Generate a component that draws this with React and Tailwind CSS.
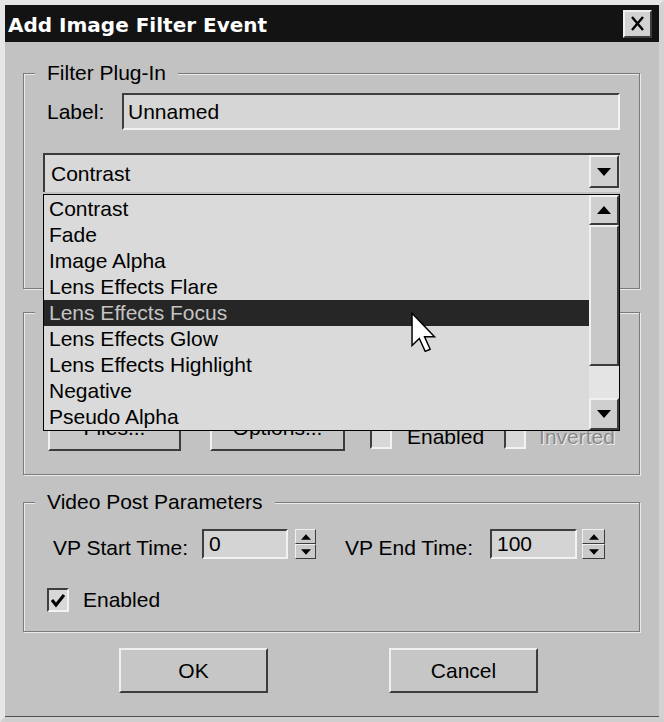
import React from "react";

const raised =
  "border-2 border-t-[#f0f0f0] border-l-[#f0f0f0] border-r-[#3c3c3c] border-b-[#3c3c3c]";
const raisedThin =
  "border border-t-[#f0f0f0] border-l-[#f0f0f0] border-r-[#3c3c3c] border-b-[#3c3c3c]";
const sunken =
  "border-2 border-t-[#3e3e3e] border-l-[#3e3e3e] border-r-[#f2f2f2] border-b-[#f2f2f2]";

function Tri({ up = false, w = 14, h = 8 }) {
  return (
    <svg width={w} height={h} viewBox="0 0 14 8" className="block">
      {up ? <polygon points="0,8 14,8 7,0" fill="#000" /> : <polygon points="0,0 14,0 7,8" fill="#000" />}
    </svg>
  );
}

function Group({ title, className = "", children }) {
  return (
    <fieldset
      className={
        "border border-[#7a7a7a] px-[11px] shadow-[inset_1px_1px_0_#ebebeb,1px_1px_0_#ebebeb] " + className
      }
    >
      <legend className="bg-[#c2c2c2] px-[12px] leading-[24px]">{title}</legend>
      {children}
    </fieldset>
  );
}

function Button({ className = "", children, top = false }) {
  return (
    <div
      className={
        raised +
        " flex justify-center bg-[#c6c6c6] leading-[24px] " +
        (top ? "items-start pt-[2px] " : "items-center ") +
        className
      }
    >
      {children}
    </div>
  );
}

function Spinner({ className = "" }) {
  return (
    <div className={"flex h-full flex-col " + className}>
      <div className={raisedThin + " flex flex-1 items-center justify-center bg-[#cacaca]"}>
        <Tri up w={10} h={6} />
      </div>
      <div className={raisedThin + " flex flex-1 items-center justify-center bg-[#cacaca]"}>
        <Tri w={10} h={6} />
      </div>
    </div>
  );
}

const items = [
  "Contrast",
  "Fade",
  "Image Alpha",
  "Lens Effects Flare",
  "Lens Effects Focus",
  "Lens Effects Glow",
  "Lens Effects Highlight",
  "Negative",
  "Pseudo Alpha",
];

function DropList() {
  return (
    <div className="absolute left-[-2px] top-[39px] z-20 flex h-[237px] w-[577px] border border-black bg-[#dadada]">
      <div className="flex-1 pt-[1px]">
        {items.map((it) => (
          <div
            key={it}
            className={
              "flex h-[26px] items-center pl-[5px] " +
              (it === "Lens Effects Focus" ? "bg-[#262626] text-[#c4c4c4]" : "text-black")
            }
          >
            {it}
          </div>
        ))}
      </div>
      <div className="flex w-[30px] flex-col">
        <div className={raised + " flex h-[30px] items-center justify-center bg-[#cfcfcf]"}>
          <Tri up />
        </div>
        <div className={raised + " h-[141px] bg-[#c8c8c8]"} />
        <div className="flex-1 bg-[#e4e4e4]" />
        <div className={raised + " flex h-[32px] items-center justify-center bg-[#cfcfcf]"}>
          <Tri />
        </div>
      </div>
    </div>
  );
}

function CheckBox({ checked = false, className = "" }) {
  return (
    <div className={sunken + " flex h-[24px] w-[22px] items-center justify-center bg-[#d8d8d8] " + className}>
      {checked && (
        <svg width="16" height="16" viewBox="0 0 16 16">
          <polyline points="2,8 6,13 14,3" fill="none" stroke="#000" strokeWidth="3" />
        </svg>
      )}
    </div>
  );
}

export default function App() {
  return (
    <div className="relative h-[722px] w-[664px] overflow-hidden border-[5px] border-t-[#e6e6e6] border-l-[#e6e6e6] border-r-[#d2d2d2] border-b-[#cfcfcf] bg-[#c2c2c2] font-['Liberation_Sans',Arial,sans-serif] text-[21px] text-black shadow-[inset_0_-1px_0_#505050]">
      {/* Title bar */}
      <div className="flex h-[37px] items-center justify-between bg-[#131313] pl-[3px] pr-[7px]">
        <span className="pt-[2px] font-['DejaVu_Sans',sans-serif] text-[20px] font-bold text-white">
          Add Image Filter Event
        </span>
        <div className={raised + " flex h-[28px] w-[29px] items-center justify-center bg-[#d2d2d2]"}>
          <svg width="15" height="15" viewBox="0 0 15 15">
            <path d="M2 1 L13 14 M13 1 L2 14" stroke="#000" strokeWidth="2.4" fill="none" />
          </svg>
        </div>
      </div>

      {/* Body */}
      <div className="pl-[18px] pr-[19px] pt-[19px]">
        <Group title="Filter Plug-In" className="pb-[36px]">
          <div className="mt-[8px] flex h-[37px] items-center pl-[12px] pr-[8px]">
            <span className="w-[75px]">Label:</span>
            <div className={sunken + " flex h-full flex-1 items-center bg-[#d6d6d6] pl-[4px]"}>Unnamed</div>
          </div>
          <div className="relative mx-[8px] mt-[23px] flex h-[39px] border-l-2 border-t-2 border-l-[#3a3a3a] border-t-[#3a3a3a] bg-[#d8d8d8]">
            <span className="flex flex-1 items-center pl-[6px]">Contrast</span>
            <div className={raised + " mr-[1px] flex h-[33px] w-[30px] items-center justify-center bg-[#cfcfcf]"}>
              <Tri />
            </div>
            <DropList />
          </div>
          <div className="mt-[20px] flex h-[40px] gap-[29px] pl-[13px]">
            <Button className="w-[133px]">About...</Button>
            <Button className="w-[135px]">Setup...</Button>
          </div>
        </Group>

        <Group title="Mask" className="mt-[11px] pb-[23px]">
          <div className="mt-[88px] flex items-end">
            <Button top className="ml-[13px] h-[39px] w-[133px]">Files...</Button>
            <Button top className="ml-[29px] h-[39px] w-[135px]">Options...</Button>
            <div className="mb-[2px] ml-[25px] flex h-[24px] items-center">
              <CheckBox />
              <span className="ml-[15px]">Enabled</span>
            </div>
            <div className="mb-[2px] ml-[20px] flex h-[24px] items-center">
              <CheckBox />
              <span className="ml-[13px] text-[#8a8a8a] [text-shadow:1px_1px_0_#f2f2f2]">Inverted</span>
            </div>
          </div>
        </Group>

        <Group title="Video Post Parameters" className="mt-[15px] pb-[19px]">
          <div className="mt-[15px] flex h-[30px] items-center pl-[18px]">
            <span className="mt-[8px] w-[149px]">VP Start Time:</span>
            <div className={sunken + " flex h-full w-[86px] items-center bg-[#d4d4d4] pl-[5px]"}>0</div>
            <Spinner className="ml-[7px] w-[21px]" />
            <span className="ml-[29px] mt-[8px] w-[145px]">VP End Time:</span>
            <div className={sunken + " flex h-full w-[87px] items-center bg-[#d4d4d4] pl-[5px]"}>100</div>
            <Spinner className="ml-[5px] w-[23px]" />
          </div>
          <div className="mt-[28px] flex h-[25px] items-center pl-[12px]">
            <CheckBox checked />
            <span className="ml-[14px]">Enabled</span>
          </div>
        </Group>
      </div>

      <div className="mt-[16px] flex gap-[121px] pl-[114px]">
        <Button className="h-[45px] w-[149px]">OK</Button>
        <Button className="h-[45px] w-[149px]">Cancel</Button>
      </div>

      {/* Mouse cursor */}
      <svg
        className="absolute left-[406px] top-[307px] z-30"
        width="25"
        height="41"
        viewBox="0 0 12 19.5"
      >
        <polygon
          points="0.5,0.5 0.5,16 4,12.6 6.8,18.8 9.2,17.8 6.5,11.8 11.3,11.8"
          fill="#fff"
          stroke="#000"
          strokeWidth="0.7"
          strokeLinejoin="miter"
        />
      </svg>
    </div>
  );
}
